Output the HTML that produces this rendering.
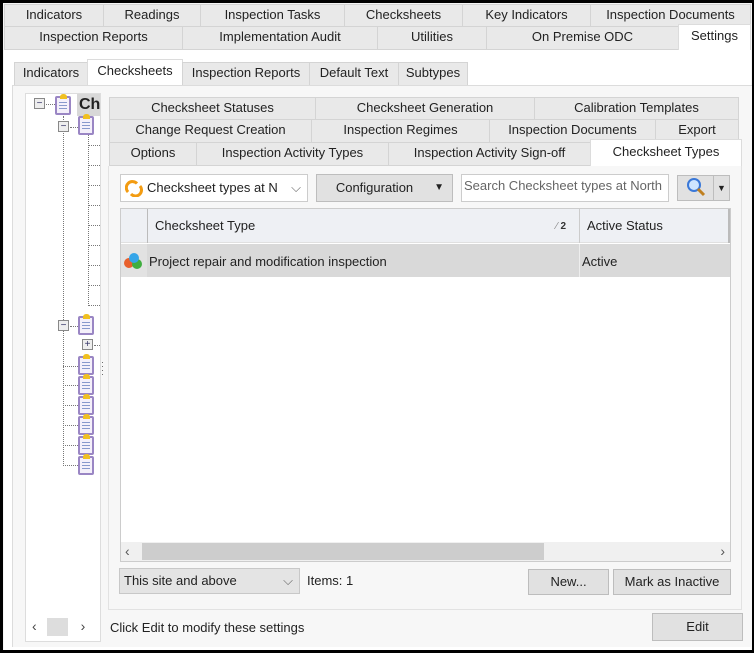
<!DOCTYPE html><html><head><style>
*{box-sizing:border-box;margin:0;padding:0}
body{width:754px;height:653px;background:#000;font-family:"Liberation Sans",sans-serif;font-size:13px;color:#222;position:relative;overflow:hidden}
.a{position:absolute}
.t{position:absolute;background:#e9e9e9;border:1px solid #d4d4d4;text-align:center;line-height:20px;white-space:nowrap;overflow:hidden}
.s{background:#fff;border-color:#dcdcdc;border-bottom:none}
.btn{position:absolute;background:#e1e1e1;border:1px solid #bdbdbd;text-align:center}
.ic{position:absolute;width:16px;height:19px;border:2px solid #9a86c4;background:#f4f0fa;border-radius:2px}
.ic:before{content:"";position:absolute;left:3px;top:-4px;width:7px;height:5px;background:#f0c020;border-radius:3px 3px 0 0}
.ic:after{content:"";position:absolute;left:2px;top:4px;width:8px;height:9px;background:repeating-linear-gradient(#8899cc 0 1px,transparent 1px 3px)}
.dv{position:absolute;border-left:1px dotted #777}
.dh{position:absolute;border-top:1px dotted #777}
.pm{position:absolute;width:11px;height:11px;border:1px solid #888;background:#eee;font-size:10px;line-height:9px;text-align:center;color:#336}
</style></head><body>
<div class="a" style="left:3px;top:3px;width:749px;height:647px;background:#f5f5f5"></div>
<!-- top tabs -->
<div class="t" style="left:4px;top:4px;width:100px;height:23px">Indicators</div>
<div class="t" style="left:103px;top:4px;width:98px;height:23px">Readings</div>
<div class="t" style="left:200px;top:4px;width:145px;height:23px">Inspection Tasks</div>
<div class="t" style="left:344px;top:4px;width:119px;height:23px">Checksheets</div>
<div class="t" style="left:462px;top:4px;width:129px;height:23px">Key Indicators</div>
<div class="t" style="left:590px;top:4px;width:161px;height:23px">Inspection Documents</div>
<div class="t" style="left:4px;top:26px;width:179px;height:24px">Inspection Reports</div>
<div class="t" style="left:182px;top:26px;width:196px;height:24px">Implementation Audit</div>
<div class="t" style="left:377px;top:26px;width:110px;height:24px">Utilities</div>
<div class="t" style="left:486px;top:26px;width:193px;height:24px">On Premise ODC</div>
<div class="t s" style="left:678px;top:24px;width:73px;height:27px;line-height:22px">Settings</div>
<div class="a" style="left:4px;top:50px;width:747px;height:600px;background:#fff"></div>
<!-- second tabs -->
<div class="t" style="left:14px;top:62px;width:74px;height:24px">Indicators</div>
<div class="t s" style="left:87px;top:59px;width:96px;height:28px;line-height:22px">Checksheets</div>
<div class="t" style="left:182px;top:62px;width:128px;height:24px">Inspection Reports</div>
<div class="t" style="left:309px;top:62px;width:90px;height:24px">Default Text</div>
<div class="t" style="left:398px;top:62px;width:70px;height:24px">Subtypes</div>
<div class="a" style="left:12px;top:85px;width:740px;height:562px;background:#f7f7f7;border:1px solid #dcdcdc;border-right:none;border-bottom:none"></div>
<!-- tree -->
<div class="a" style="left:25px;top:93px;width:76px;height:520px;background:#fff;border:1px solid #ddd"></div>
<div class="a" style="left:77px;top:94px;width:23px;height:22px;background:#d8d8d8;font-weight:bold;font-size:16px;line-height:22px;padding-left:2px;overflow:hidden">Ch</div>
<div class="pm" style="left:34px;top:98px">−</div><div class="dh" style="left:46px;top:104px;width:9px"></div>
<div class="ic" style="left:55px;top:96px"></div>
<div class="dv" style="left:63px;top:116px;height:350px"></div>
<div class="pm" style="left:58px;top:121px">−</div><div class="dh" style="left:70px;top:127px;width:8px"></div>
<div class="ic" style="left:78px;top:116px"></div>
<div class="dv" style="left:88px;top:135px;height:171px"></div>
<div class="dh" style="left:88px;top:145px;width:12px"></div><div class="dh" style="left:88px;top:165px;width:12px"></div>
<div class="dh" style="left:88px;top:185px;width:12px"></div><div class="dh" style="left:88px;top:205px;width:12px"></div>
<div class="dh" style="left:88px;top:225px;width:12px"></div><div class="dh" style="left:88px;top:245px;width:12px"></div>
<div class="dh" style="left:88px;top:265px;width:12px"></div><div class="dh" style="left:88px;top:285px;width:12px"></div>
<div class="dh" style="left:88px;top:305px;width:12px"></div>
<div class="pm" style="left:58px;top:320px">−</div><div class="dh" style="left:70px;top:326px;width:8px"></div>
<div class="ic" style="left:78px;top:316px"></div>
<div class="pm" style="left:82px;top:339px">+</div><div class="dh" style="left:94px;top:345px;width:6px"></div>
<div class="ic" style="left:78px;top:356px"></div><div class="dh" style="left:63px;top:366px;width:15px"></div>
<div class="ic" style="left:78px;top:376px"></div><div class="dh" style="left:63px;top:385px;width:15px"></div>
<div class="ic" style="left:78px;top:396px"></div><div class="dh" style="left:63px;top:405px;width:15px"></div>
<div class="ic" style="left:78px;top:416px"></div><div class="dh" style="left:63px;top:425px;width:15px"></div>
<div class="ic" style="left:78px;top:436px"></div><div class="dh" style="left:63px;top:445px;width:15px"></div>
<div class="ic" style="left:78px;top:456px"></div><div class="dh" style="left:63px;top:465px;width:15px"></div>
<div class="a" style="left:25px;top:612px;width:76px;height:30px;background:#fff;border:1px solid #ddd;border-top:none;font-size:14px;color:#444;line-height:28px"><span style="margin-left:6px">‹</span><span class="a" style="left:21px;top:6px;width:21px;height:18px;background:#ddd"></span><span style="margin-left:44px">›</span></div>
<div class="a" style="left:101px;top:360px;font-size:9px;line-height:4px;color:#555">·<br>·<br>·<br>·</div>
<!-- inner tabs -->
<div class="t" style="left:109px;top:97px;width:207px;height:23px">Checksheet Statuses</div>
<div class="t" style="left:315px;top:97px;width:220px;height:23px">Checksheet Generation</div>
<div class="t" style="left:534px;top:97px;width:205px;height:23px">Calibration Templates</div>
<div class="t" style="left:109px;top:119px;width:203px;height:24px">Change Request Creation</div>
<div class="t" style="left:311px;top:119px;width:179px;height:24px">Inspection Regimes</div>
<div class="t" style="left:489px;top:119px;width:167px;height:24px">Inspection Documents</div>
<div class="t" style="left:655px;top:119px;width:84px;height:24px">Export</div>
<div class="t" style="left:109px;top:142px;width:88px;height:24px">Options</div>
<div class="t" style="left:196px;top:142px;width:193px;height:24px">Inspection Activity Types</div>
<div class="t" style="left:388px;top:142px;width:203px;height:24px">Inspection Activity Sign-off</div>
<div class="t s" style="left:590px;top:139px;width:152px;height:28px;line-height:24px">Checksheet Types</div>
<div class="a" style="left:108px;top:166px;width:634px;height:444px;background:#f7f7f7;border:1px solid #e2e2e2;border-top:none"></div>
<!-- toolbar -->
<div class="a" style="left:120px;top:174px;width:188px;height:28px;background:#fff;border:1px solid #ccc;line-height:25px;padding-left:26px;white-space:nowrap">Checksheet types at N<span class="a" style="right:6px;top:0;color:#666">⌵</span>
<svg class="a" style="left:4px;top:5px" width="18" height="17" viewBox="0 0 18 17"><path d="M3 12A6 6 0 0 1 12 3.5" stroke="#f39c12" stroke-width="3" fill="none"/><path d="M15 6A6 6 0 0 1 6 14" stroke="#f39c12" stroke-width="3" fill="none"/></svg></div>
<div class="btn" style="left:316px;top:174px;width:137px;height:28px;line-height:26px;padding-right:20px">Configuration<span class="a" style="right:8px;top:0;font-size:10px">▼</span></div>
<div class="a" style="left:461px;top:174px;width:208px;height:28px;background:#fff;border:1px solid #ccc;color:#666;line-height:22px;padding-left:2px;white-space:nowrap;overflow:hidden">Search Checksheet types at North</div>
<div class="btn" style="left:677px;top:175px;width:37px;height:26px"><svg width="24" height="22" viewBox="0 0 24 22"><circle cx="10" cy="9" r="6" fill="#cfe6ff" stroke="#3a78d8" stroke-width="2"/><path d="M14 13l6 6" stroke="#c08020" stroke-width="3"/></svg></div>
<div class="btn" style="left:713px;top:175px;width:17px;height:26px;font-size:9px;line-height:24px">▼</div>
<!-- grid -->
<div class="a" style="left:120px;top:208px;width:611px;height:354px;background:#fff;border:1px solid #ccc"></div>
<div class="a" style="left:121px;top:209px;width:609px;height:34px;background:#eef0f4;border-bottom:1px solid #e0e0e0"></div>
<div class="a" style="left:147px;top:209px;border-left:1px solid #bbb;height:34px"></div>
<div class="a" style="left:579px;top:209px;border-left:1px solid #ccc;height:34px"></div>
<div class="a" style="left:728px;top:209px;border-left:2px solid #bbb;height:34px"></div>
<div class="a" style="left:155px;top:218px">Checksheet Type</div>
<div class="a" style="left:556px;top:221px;font-size:10px;color:#888">⁄ <b style="color:#333">2</b></div>
<div class="a" style="left:587px;top:218px">Active Status</div>
<div class="a" style="left:121px;top:244px;width:609px;height:33px;background:#d9d9d9"></div>
<div class="a" style="left:121px;top:244px;width:26px;height:33px;background:#e2e2e2"></div>
<div class="a" style="left:579px;top:244px;border-left:1px solid #eee;height:33px"></div>
<svg class="a" style="left:122px;top:252px" width="22" height="18"><circle cx="7" cy="11" r="5" fill="#e8602c"/><circle cx="15" cy="12" r="5" fill="#3fae3f"/><circle cx="12" cy="6" r="5" fill="#35a5e8"/></svg>
<div class="a" style="left:149px;top:254px">Project repair and modification inspection</div>
<div class="a" style="left:582px;top:254px">Active</div>
<div class="a" style="left:121px;top:542px;width:609px;height:19px;background:#f0f0f0;color:#555;font-size:14px;line-height:18px"><span style="margin-left:4px">‹</span><span class="a" style="left:21px;top:1px;width:402px;height:17px;background:#cdcdcd"></span><span class="a" style="right:5px;top:0">›</span></div>
<!-- bottom -->
<div class="a" style="left:119px;top:568px;width:181px;height:26px;background:#e4e4e4;border:1px solid #c8c8c8;line-height:24px;padding-left:4px">This site and above<span class="a" style="right:6px;top:0;color:#666">⌵</span></div>
<div class="a" style="left:307px;top:573px">Items: 1</div>
<div class="btn" style="left:528px;top:569px;width:81px;height:26px;line-height:24px">New...</div>
<div class="btn" style="left:613px;top:569px;width:118px;height:26px;line-height:24px">Mark as Inactive</div>
<div class="a" style="left:110px;top:620px">Click Edit to modify these settings</div>
<div class="btn" style="left:652px;top:613px;width:91px;height:28px;line-height:26px">Edit</div>
</body></html>
